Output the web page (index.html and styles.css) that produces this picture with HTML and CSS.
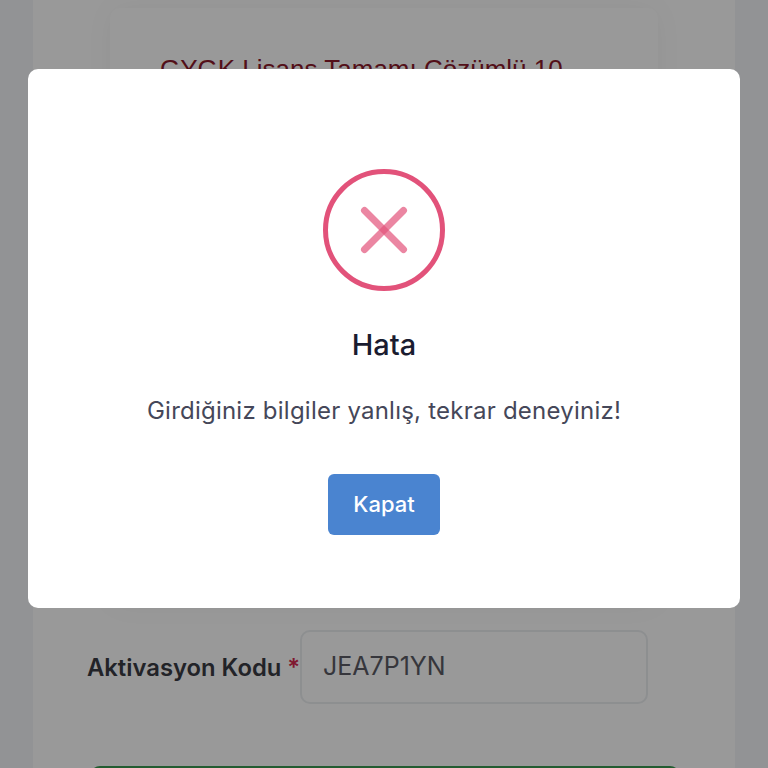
FILE: index.html
```html
<!DOCTYPE html>
<html lang="en">
<head>
  <meta charset="UTF-8">
  <title>Aktivasyon</title>
  <link rel="stylesheet" href="styles.css">
</head>
<body>
  <div class="page">
    <div class="panel">
      <div class="product-card">
        <h3 class="product-title">GYGK Lisans Tamamı Çözümlü 10</h3>
      </div>
      <form class="form">
        <div class="form-row">
          <label class="form-label" for="code">Aktivasyon Kodu <span class="required">*</span></label>
          <input class="form-input" type="text" id="code" value="JEA7P1YN">
        </div>
        <button class="submit" type="button"></button>
      </form>
    </div>
  </div>

  <div class="overlay">
    <div class="modal">
      <svg class="modal-icon" width="122" height="122" viewBox="0 0 122 122">
        <circle cx="61" cy="61" r="58.5" fill="none" stroke="#e2527a" stroke-width="5"/>
        <path class="cross" d="M41.500 41.500 80.500 80.500"/>
        <path class="cross" d="M80.500 41.500 41.500 80.500"/>
      </svg>
      <h2 class="modal-title">Hata</h2>
      <p class="modal-text">Girdiğiniz bilgiler yanlış, tekrar deneyiniz!</p>
      <button class="modal-button" type="button">Kapat</button>
    </div>
  </div>
</body>
</html>
```
FILE: styles.css
```css
* {
  box-sizing: border-box;
}

html, body {
  height: 100%;
}

body {
  margin: 0;
  overflow: hidden;
  background: #f3f5f8;
  font-family: Inter, "Liberation Sans", sans-serif;
}

.page {
  padding: 0 33px;
}

.panel {
  background: #fff;
  height: 768px;
  overflow: hidden;
  padding-top: 8px;
}

.product-card {
  margin: 0 77px;
  height: 597px;
  padding: 47px 50px;
  background: #fff;
  border-radius: 10px;
  box-shadow: 0 0 30px rgba(0, 0, 0, 0.04);
}

.product-title {
  margin: 0;
  font-family: "Liberation Sans", Arial, sans-serif;
  font-size: 26px;
  font-weight: 400;
  line-height: 28px;
  color: #8b1a2b;
}

.form {
  padding: 25px 54px 0;
}

.form-row {
  display: flex;
  align-items: center;
}

.form-label {
  width: 213px;
  font-size: 23.8px;
  font-weight: 600;
  color: #3a3b44;
  white-space: nowrap;
}

.required {
  color: #d6294f;
}

.form-input {
  width: 348px;
  height: 74px;
  padding: 0 21px 2px;
  font: 400 25px Inter, sans-serif;
  color: #5a5b65;
  background: #fff;
  border: 2px solid #eceef1;
  border-radius: 10px;
}

.submit {
  display: block;
  width: 590px;
  height: 60px;
  margin: 62px 0 0 3px;
  background: #3b9a52;
  border: 0;
  border-radius: 10px;
}

.overlay {
  position: fixed;
  top: 0;
  left: 0;
  right: 0;
  bottom: 0;
  background: rgba(0, 0, 0, 0.4);
  padding: 69px 28px 0;
}

.modal {
  display: flex;
  flex-direction: column;
  align-items: center;
  height: 539px;
  padding-top: 100px;
  background: #fff;
  border-radius: 10px;
}

.cross {
  fill: none;
  stroke: #e2527a;
  stroke-width: 7;
  stroke-linecap: round;
  opacity: 0.7;
}

.modal-icon {
  display: block;
}

.modal-title {
  margin: 36px 0 0;
  font-size: 29px;
  line-height: 36px;
  font-weight: 500;
  color: #1a1c30;
}

.modal-text {
  margin: 30px 0 0;
  font-size: 24px;
  letter-spacing: 0.23px;
  line-height: 36px;
  color: #454759;
}

.modal-button {
  width: 112px;
  height: 61px;
  margin-top: 45px;
  padding-bottom: 3px;
  color: #fff;
  font: 500 22px Inter, sans-serif;
  background: #4a84d0;
  border: 0;
  border-radius: 6px;
}
```
